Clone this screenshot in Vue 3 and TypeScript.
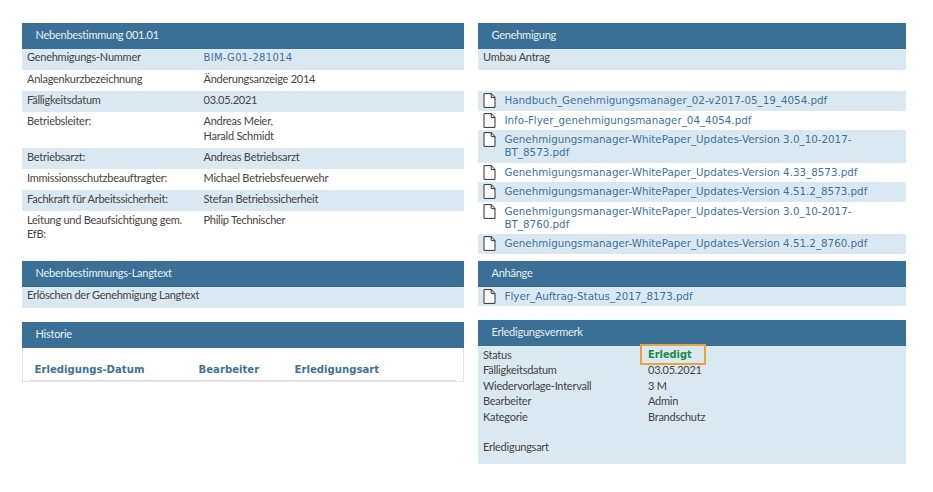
<script setup lang="ts">
const details = [
  { label: 'Genehmigungs-Nummer', value: ['BIM-G01-281014'], mono: true },
  { label: 'Anlagenkurzbezeichnung', value: ['Änderungsanzeige 2014'] },
  { label: 'Fälligkeitsdatum', value: ['03.05.2021'] },
  { label: 'Betriebsleiter:', value: ['Andreas Meier,', 'Harald Schmidt'] },
  { label: 'Betriebsarzt:', value: ['Andreas Betriebsarzt'] },
  { label: 'Immissionsschutzbeauftragter:', value: ['Michael Betriebsfeuerwehr'] },
  { label: 'Fachkraft für Arbeitssicherheit:', value: ['Stefan Betriebssicherheit'] },
  { label: 'Leitung und Beaufsichtigung gem. EfB:', value: ['Philip Technischer'] },
]
const files = [
  'Handbuch_Genehmigungsmanager_02-v2017-05_19_4054.pdf',
  'Info-Flyer_genehmigungsmanager_04_4054.pdf',
  'Genehmigungsmanager-WhitePaper_Updates-Version 3.0_10-2017-BT_8573.pdf',
  'Genehmigungsmanager-WhitePaper_Updates-Version 4.33_8573.pdf',
  'Genehmigungsmanager-WhitePaper_Updates-Version 4.51.2_8573.pdf',
  'Genehmigungsmanager-WhitePaper_Updates-Version 3.0_10-2017-BT_8760.pdf',
  'Genehmigungsmanager-WhitePaper_Updates-Version 4.51.2_8760.pdf',
]
const status = [
  { label: 'Fälligkeitsdatum', value: '03.05.2021' },
  { label: 'Wiedervorlage-Intervall', value: '3 M' },
  { label: 'Bearbeiter', value: 'Admin' },
  { label: 'Kategorie', value: 'Brandschutz' },
]
</script>

<template>
  <div class="page">
    <div class="col left">
      <section class="panel p1">
        <h2>Nebenbestimmung 001.01</h2>
        <div v-for="d in details" :key="d.label" class="row">
          <div class="label">{{ d.label }}</div>
          <div class="value" :class="{ mono: d.mono }">
            <div v-for="v in d.value" :key="v">{{ v }}</div>
          </div>
        </div>
      </section>
      <section class="panel p2">
        <h2>Nebenbestimmungs-Langtext</h2>
        <div class="plain">Erlöschen der Genehmigung Langtext</div>
      </section>
      <section class="panel p3">
        <h2>Historie</h2>
        <div class="history">
          <div class="hrow">
            <span class="h1">Erledigungs-Datum</span>
            <span class="h2c">Bearbeiter</span>
            <span>Erledigungsart</span>
          </div>
        </div>
      </section>
    </div>
    <div class="col right">
      <section class="panel">
        <h2>Genehmigung</h2>
        <div class="plain">Umbau Antrag</div>
      </section>
      <div class="files">
        <div v-for="f in files" :key="f" class="file">
          <svg class="doc" viewBox="0 0 13 15" width="13" height="15" aria-hidden="true">
            <path d="M1 .6h7.4L12 4.4v10H1z M8.2.6v4H12" fill="#fff" stroke="#333" stroke-width="1" />
          </svg>
          <span class="link">{{ f }}</span>
        </div>
      </div>
      <section class="panel p4">
        <h2>Anhänge</h2>
        <div class="file attach">
          <svg class="doc" viewBox="0 0 13 15" width="13" height="15" aria-hidden="true">
            <path d="M1 .6h7.4L12 4.4v10H1z M8.2.6v4H12" fill="#fff" stroke="#333" stroke-width="1" />
          </svg>
          <span class="link">Flyer_Auftrag-Status_2017_8173.pdf</span>
        </div>
      </section>
      <section class="panel p5">
        <h2>Erledigungsvermerk</h2>
        <div class="done">
          <div class="drow">
            <span class="dl">Status</span>
            <span class="badge">Erledigt</span>
          </div>
          <div v-for="s in status" :key="s.label" class="drow">
            <span class="dl">{{ s.label }}</span>
            <span>{{ s.value }}</span>
          </div>
          <div class="drow last"><span class="dl">Erledigungsart</span></div>
        </div>
      </section>
    </div>
  </div>
</template>

<style scoped>
.page {
  display: flex;
  gap: 14px;
  padding: 23px 0 0 21.5px;
  font-family: Lato, sans-serif;
  font-size: 11px;
  letter-spacing: -.25px;
  color: #444;
}
.col { display: flex; flex-direction: column; }
.left { width: 442px; }
.right { width: 428px; }
.panel h2 {
  margin: 0;
  height: 26px;
  line-height: 24px;
  padding-left: 14px;
  background: #3b7096;
  color: #e6eff5;
  font-size: 11px;
  font-weight: 400;
}
.row {
  display: grid;
  grid-template-columns: 176.5px 1fr;
  padding: 2px 5.5px 4.5px;
  line-height: 14.5px;
}
.row:nth-of-type(odd) { background: #dae8f2; }
.row:nth-of-type(1) { padding: 1px 5.5px 5.5px; }
.label { padding-right: 6px; }
.mono {
  padding-top: 1px;
  margin-bottom: -1px;
  font-family: "DejaVu Sans", sans-serif;
  font-size: 10px;
  color: #41729a;
  letter-spacing: .3px;
}
.plain {
  box-sizing: border-box;
  background: #dae8f2;
  height: 21px;
  padding: 1px 5.5px;
  line-height: 14.5px;
}
.p2 { margin-top: 14.5px; }
.p3 { margin-top: 14.5px; }
.p3 .history {
  box-sizing: border-box;
  border: 1px solid #e4e4e4;
  border-top: 0;
  height: 34px;
  padding: 0 7px;
}
.hrow {
  box-sizing: border-box;
  display: flex;
  height: 33px;
  padding: 15px 0 0 5px;
  border-bottom: 1px solid #ddd;
  font-family: "DejaVu Sans", sans-serif;
  font-size: 10.15px;
  font-weight: 700;
  letter-spacing: 0;
  line-height: 14px;
  color: #41729a;
}
.h1 { width: 164px; }
.h2c { width: 96px; }
.files { margin-top: 21px; }
.file {
  display: flex;
  align-items: flex-start;
  padding: 3px 0 3.5px 5px;
}
.file:nth-child(odd) { background: #dae8f2; }
.file:nth-child(even) { background: #fff; }
.doc { flex: none; margin: -1px 0 -1px; }
.link {
  margin-left: 9px;
  width: 380px;
  font-family: "DejaVu Sans", sans-serif;
  font-size: 10.32px;
  letter-spacing: 0;
  line-height: 13px;
  color: #41729a;
}
.p4 { margin-top: 7px; }
.file.attach { background: #dae8f2; }
.p5 { margin-top: 14px; }
.done {
  box-sizing: border-box;
  background: #dae8f2;
  height: 118px;
  padding-top: 1px;
}
.drow {
  display: flex;
  height: 15.4px;
  line-height: 15.4px;
  padding-left: 5.5px;
}
.dl { width: 165px; }
.drow.last { margin-top: 15.5px; }
.badge {
  box-sizing: border-box;
  align-self: flex-start;
  flex: none;
  width: 66px;
  height: 21px;
  margin: -3px 0 0 -8px;
  padding-left: 6px;
  border: 2px solid #eda33c;
  font-family: "DejaVu Sans", sans-serif;
  font-weight: 700;
  font-size: 9.8px;
  letter-spacing: 0;
  line-height: 18px;
  color: #1f8a43;
}
</style>
